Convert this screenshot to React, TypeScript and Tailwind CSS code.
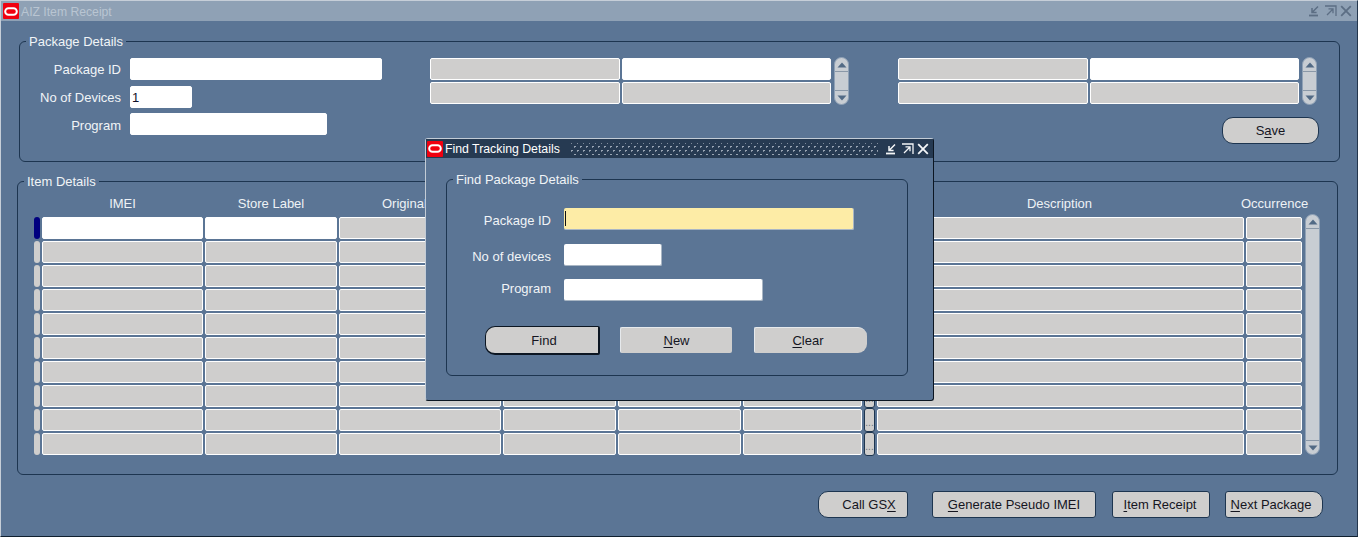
import React from "react";

const BG = "bg-[#5b7595]";

function Oracle({ className }: { className: string }) {
  return (
    <span className={`flex items-center justify-center bg-[#f0000f] ${className}`}>
      <svg width="14" height="9" viewBox="0 0 14 9">
        <rect x="1.2" y="1.2" width="11.6" height="6.6" rx="3.3" fill="none" stroke="#fff" strokeWidth="2" />
      </svg>
    </span>
  );
}

function WinIcons({ color, gap }: { color: string; gap: string }) {
  return (
    <div className={`flex items-center ${gap}`}>
      <svg width="13" height="12" viewBox="0 0 13 12" fill="none" stroke={color} strokeWidth="1.5">
        <path d="M1 10.5H10" strokeWidth="1.8" />
        <path d="M10 1.5L4.5 7M4 3V7.6H8.6" />
      </svg>
      <svg width="13" height="12" viewBox="0 0 13 12" fill="none" stroke={color} strokeWidth="1.3">
        <path d="M1 1H12V11" />
        <path d="M3 10L8.5 4.5M4.5 3.8H9V8.3" />
      </svg>
      <svg width="12" height="12" viewBox="0 0 12 12" fill="none" stroke={color} strokeWidth="1.8">
        <path d="M1.2 1.2L10.8 10.8M10.8 1.2L1.2 10.8" />
      </svg>
    </div>
  );
}

function Field({ w, tone = "gray", children }: { w?: string; tone?: "gray" | "white"; children?: React.ReactNode }) {
  const look = tone === "white" ? "bg-white border-white" : "bg-[#cfcecd] border-white";
  return (
    <div className={`h-[22px] border rounded-[2px] flex items-center pl-[1px] text-[13px] leading-none text-[#10102a] ${look} ${w ?? ""}`}>
      {children}
    </div>
  );
}

function Group({ title, box, children }: { title: string; box: string; children: React.ReactNode }) {
  return (
    <div className={`relative border border-[#1d3550] rounded-[6px] ${box}`}>
      <span className={`absolute -top-[9px] left-[6px] px-[3px] text-[13px] leading-[18px] text-[#f1f4f7] ${BG}`}>
        {title}
      </span>
      {children}
    </div>
  );
}

function Label({ children, className }: { children: React.ReactNode; className: string }) {
  return <div className={`text-right text-[13px] leading-[22px] text-[#f1f4f7] ${className}`}>{children}</div>;
}

function Scroll({ className }: { className: string }) {
  return (
    <div className={`flex flex-col items-stretch rounded-full bg-[#c8cdd3] border border-[#8fa1b6] overflow-hidden ${className}`}>
      <div className="h-[14px] shrink-0 flex items-center justify-center border-b border-[#8a98a8]">
        <svg width="10" height="6" viewBox="0 0 10 6"><path d="M5 0.5L9.5 5.5H0.5Z" fill="#526a85" /></svg>
      </div>
      <div className="flex-1" />
      <div className="h-[14px] shrink-0 flex items-center justify-center border-t border-[#8a98a8]">
        <svg width="10" height="6" viewBox="0 0 10 6"><path d="M5 5.5L9.5 0.5H0.5Z" fill="#526a85" /></svg>
      </div>
    </div>
  );
}

function Btn({ className, children }: { className: string; children: React.ReactNode }) {
  return (
    <button className={`bg-[#cfcecd] text-[13px] leading-none text-[#15151f] flex items-center justify-center ${className}`}>
      {children}
    </button>
  );
}

const U = ({ children }: { children: string }) => <span className="underline underline-offset-2">{children}</span>;

const rowIndexes = [0, 1, 2, 3, 4, 5, 6, 7, 8, 9];

function MultiBlock() {
  return (
    <div className="flex">
      <div className="grid grid-cols-[190px_209px] gap-[2px]">
        <Field />
        <Field tone="white" />
        <Field />
        <Field />
      </div>
      <Scroll className="w-[15px] h-[48px] ml-[3px] -my-[1px]" />
    </div>
  );
}

export default function App() {
  return (
    <div className="relative w-[1358px] h-[537px] overflow-hidden font-['Liberation_Sans',Arial,sans-serif]">
      <div className={`flex flex-col w-[1358px] h-[537px] border border-t-[#c6ced8] border-l-[#c6ced8] border-b-[#10202f] border-r-[#23364d] ${BG}`}>
        <div className="h-[20px] flex items-center bg-[#8fa1b5] shrink-0">
          <Oracle className="w-[16px] h-[16px] ml-[2px] rounded-[1px]" />
          <span className="ml-[2px] text-[12.2px] text-[#b9c5d2] translate-y-[1px]">AIZ Item Receipt</span>
          <div className="ml-auto mr-[5px]">
            <WinIcons color="#5c6e84" gap="gap-[3px]" />
          </div>
        </div>

        <Group title="Package Details" box="ml-[18px] mt-[20px] w-[1321px] h-[121px] shrink-0">
          <div className="flex pt-[16px]">
            <div className="w-[410px] shrink-0 grid grid-cols-[101px_auto] gap-x-[9px] content-start">
              <Label className="self-center translate-y-[1px]">Package ID</Label>
              <Field w="w-[252px]" tone="white" />
              <Label className="mt-[6px] translate-y-[1px]">No of Devices</Label>
              <Field w="w-[62px] mt-[6px]" tone="white">1</Field>
              <Label className="mt-[5px] translate-y-[2px]">Program</Label>
              <Field w="w-[197px] mt-[5px]" tone="white" />
            </div>
            <div className="w-[468px] shrink-0"><MultiBlock /></div>
            <div className="w-[421px] flex flex-col">
              <MultiBlock />
              <Btn className="ml-auto mt-[13px] w-[97px] h-[27px] rounded-[11px] border border-[#1d3550]">
                <span>S<U>a</U>ve</span>
              </Btn>
            </div>
          </div>
        </Group>

        <Group title="Item Details" box="ml-[16px] mt-[19px] w-[1321px] h-[294px] shrink-0">
          <div className="pl-[16px] pt-[13px]">
            <div className="grid grid-cols-[6px_161px_132px_162px_113px_123px_119px_11px_367px_56px] gap-x-[2px] text-center text-[13px] leading-[18px] text-[#eef2f6] h-[22px]">
              <div />
              <div>IMEI</div>
              <div>Store Label</div>
              <div className="text-left pl-[43px]">Original</div>
              <div />
              <div />
              <div />
              <div />
              <div className="-translate-x-[1px]">Description</div>
              <div className="-translate-x-[5px]">Occurrence</div>
            </div>
            <div className="flex">
              <div className="grid grid-cols-[6px_161px_132px_162px_113px_123px_119px_11px_367px_56px] gap-x-[2px] gap-y-[2px] shrink-0">
                {rowIndexes.map((i) => (
                  <React.Fragment key={i}>
                    <div className={`h-[22px] rounded-[3px] ${i === 0 ? "bg-[#00007f]" : "bg-[#cfcecd]"}`} />
                    <Field tone={i === 0 ? "white" : "gray"} />
                    <Field tone={i === 0 ? "white" : "gray"} />
                    <Field />
                    <Field />
                    <Field />
                    <Field />
                    <div className="h-[24px] -my-[1px] bg-[#cfcecd] border border-[#1d3550] rounded-[3px] flex items-end justify-center pb-[3px] text-[10px] leading-none text-[#6a7480]">...</div>
                    <Field />
                    <Field />
                  </React.Fragment>
                ))}
              </div>
              <Scroll className="w-[15px] h-[241px] ml-[3px] -mt-[3px]" />
            </div>
          </div>
        </Group>

        <div className="flex mt-[16px] ml-[817px]">
          <Btn className="w-[90px] h-[27px] border border-[#1d3550] rounded-l-[10px] rounded-r-[3px]"><span className="translate-x-[6px]">Call GS<U>X</U></span></Btn>
          <Btn className="w-[164px] h-[27px] ml-[24px] border border-[#1d3550] rounded-[3px]"><span><U>G</U>enerate Pseudo IMEI</span></Btn>
          <Btn className="w-[98px] h-[27px] ml-[16px] border border-[#1d3550] rounded-[3px]"><span className="-translate-x-[1px]"><U>I</U>tem Receipt</span></Btn>
          <Btn className="w-[98px] h-[27px] ml-[15px] border border-[#1d3550] rounded-l-[3px] rounded-r-[10px]"><span className="-translate-x-[3px]"><U>N</U>ext Package</span></Btn>
        </div>
      </div>

      <div className={`absolute left-[425px] top-[138px] w-[509px] h-[263px] flex flex-col border border-t-[#c3ccd6] border-l-[#c3ccd6] border-r-[#0c1622] border-b-[#0c1622] rounded-[3px] ${BG}`}>
        <div className="h-[19px] shrink-0 flex items-center bg-[#263a52]">
          <Oracle className="w-[16px] h-[16px] ml-[1px] rounded-[1px]" />
          <span className="ml-[2px] w-[125px] text-[12.3px] text-white whitespace-nowrap translate-y-[1px]">Find Tracking Details</span>
          <svg className="shrink-0" width="308" height="14" viewBox="0 0 308 14">
            <defs>
              <pattern id="drag" width="6" height="8" patternUnits="userSpaceOnUse">
                <rect x="1" y="0" width="2" height="1" fill="#9aa6b5" />
                <rect x="1" y="1" width="1" height="1" fill="#7d8a9b" />
                <rect x="4" y="4" width="2" height="1" fill="#9aa6b5" />
                <rect x="4" y="5" width="1" height="1" fill="#7d8a9b" />
              </pattern>
            </defs>
            <rect x="0" y="1" width="308" height="12" fill="url(#drag)" />
          </svg>
          <div className="ml-[7px]"><WinIcons color="#f4f6f8" gap="gap-[3px]" /></div>
        </div>

        <Group title="Find Package Details" box="ml-[20px] mt-[21px] w-[462px] h-[197px]">
          <div className="pt-[28px] grid grid-cols-[104px_auto] gap-x-[13px] content-start">
            <Label className="self-center translate-y-[2px]">Package ID</Label>
            <div className="h-[22px] w-[290px] bg-[#fdeca6] border-b border-r border-[#a9b6c4] rounded-[2px] flex items-center pl-[1px]">
              <div className="w-[1px] h-[15px] bg-[#111]" />
            </div>
            <Label className="mt-[14px] translate-y-[2px]">No of devices</Label>
            <div className="mt-[14px] h-[22px] w-[98px] bg-white border-b border-r border-[#a9b6c4] rounded-[2px]" />
            <Label className="mt-[13px] -translate-y-[1px]">Program</Label>
            <div className="mt-[13px] h-[22px] w-[199px] bg-white border-b border-r border-[#a9b6c4] rounded-[2px]" />
          </div>
          <div className="flex items-start ml-[38px] mt-[25px]">
            <Btn className="w-[115px] h-[29px] border border-[#0c1622] border-r-2 border-b-2 rounded-l-[10px] rounded-r-[2px]"><span className="translate-x-[2px]">Find</span></Btn>
            <Btn className="w-[112px] h-[26px] ml-[20px] mt-[1px] border-t border-l border-[#e6e9ec] rounded-[2px]"><span><U>N</U>ew</span></Btn>
            <Btn className="w-[113px] h-[26px] ml-[22px] mt-[1px] border-t border-l border-[#e6e9ec] rounded-l-[2px] rounded-r-[9px]"><span className="-translate-x-[3px]"><U>C</U>lear</span></Btn>
          </div>
        </Group>
      </div>
    </div>
  );
}
